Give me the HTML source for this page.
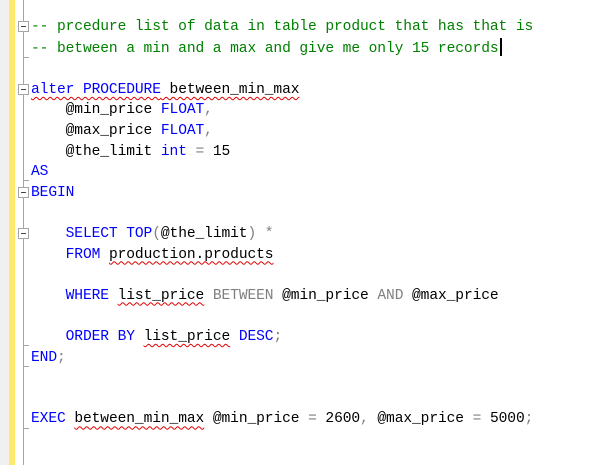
<!DOCTYPE html>
<html><head><style>
html,body{margin:0;padding:0;background:#fff;width:596px;height:465px;overflow:hidden;position:relative}
.g{position:absolute;left:0;top:0;width:9px;height:465px;background:#f0f0f0}
.y{position:absolute;left:9px;top:0;width:6px;height:465px;background:#ffe96a}
.fl{position:absolute;left:23px;width:1px;background:#a5a5a5}
.tk{position:absolute;left:23px;width:6px;height:1px;background:#a5a5a5}
.bx{position:absolute;left:18px;width:9px;height:9px;border:1px solid #a5a5a5;background:#fff}
.bx:after{content:"";position:absolute;left:2px;top:4px;width:5px;height:1px;background:#444}
pre{position:absolute;left:31px;top:17px;margin:0;font-family:"Liberation Mono",monospace;font-size:14.6px;letter-spacing:-0.1px;line-height:20.6px;color:#000}
.c{color:#008000}.k{color:#0000ff}.o{color:#808080}
.w{text-decoration:underline wavy #e00000;text-decoration-thickness:1px;text-underline-offset:3px}
.cur{display:inline-block;width:2px;height:18px;background:#000;vertical-align:-4px;margin-left:1px}
</style></head><body>
<div class="g"></div><div class="y"></div>
<div class="fl" style="top:0;height:465px"></div>
<div class="tk" style="top:57px"></div>
<div class="tk" style="top:180px"></div>
<div class="tk" style="top:345px"></div>
<div class="tk" style="top:366px"></div>
<div class="tk" style="top:428px"></div>
<div class="bx" style="top:21px"></div>
<div class="bx" style="top:84px"></div>
<div class="bx" style="top:187px"></div>
<div class="bx" style="top:228px"></div>
<pre><span class="c">-- prcedure list of data in table product that has that is</span>
<span class="c">-- between a min and a max and give me only 15 records</span><span class="cur"></span>

<span class="w"><span class="k">alter PROCEDURE</span> between_min_max</span>
    @min_price <span class="k">FLOAT</span><span class="o">,</span>
    @max_price <span class="k">FLOAT</span><span class="o">,</span>
    @the_limit <span class="k">int</span> <span class="o">=</span> 15
<span class="k">AS</span>
<span class="k">BEGIN</span>

    <span class="k">SELECT TOP</span><span class="o">(</span>@the_limit<span class="o">) *</span>
    <span class="k">FROM</span> <span class="w">production.products</span>

    <span class="k">WHERE</span> <span class="w">list_price</span> <span class="o">BETWEEN</span> @min_price <span class="o">AND</span> @max_price

    <span class="k">ORDER BY</span> <span class="w">list_price</span> <span class="k">DESC</span><span class="o">;</span>
<span class="k">END</span><span class="o">;</span>


<span class="k">EXEC</span> <span class="w">between_min_max</span> @min_price <span class="o">=</span> 2600<span class="o">,</span> @max_price <span class="o">=</span> 5000<span class="o">;</span></pre>
</body></html>
